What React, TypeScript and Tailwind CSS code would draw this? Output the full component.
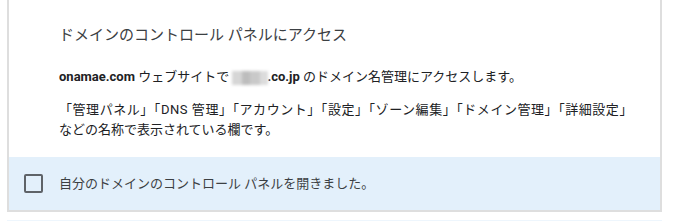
export default function App() {
  return (
    <div
      className="w-[674px] h-[221px] overflow-hidden bg-white pl-[7px]"
      style={{ fontFamily: 'Roboto, "Noto Sans CJK JP", sans-serif' }}
    >
      <div className="w-[655px] border-x-2 border-b-2 border-[#dedede] bg-white">
        <div className="pl-[50px] pr-4 pt-[23px] pb-[17px]">
          <h2 className="text-[15px] leading-6 text-[#3c4043] font-normal">
            ドメインのコントロール パネルにアクセス
          </h2>
          <p className="mt-5 text-[13px] leading-5 text-[#202124]">
            <span className="font-bold">onamae.com</span> ウェブサイトで{" "}
            <span className="relative inline-block align-middle w-[36px] h-[14px] -mr-[1px]">
              <span className="absolute inset-0 flex blur-[1.5px]">
                <span className="w-[10px] bg-[#d6d6d6]" />
                <span className="w-[8px] bg-[#bdbdbd]" />
                <span className="w-[10px] bg-[#c9c9c9]" />
                <span className="w-[8px] bg-[#dcdcdc]" />
              </span>
            </span>
            <span className="font-bold">.co.jp</span> のドメイン名管理にアクセスします。
          </p>
          <p className="mt-[13px] text-[13px] leading-5 text-[#202124]">
            <span className="tracking-[0.55px] whitespace-nowrap">
              「管理パネル」「DNS 管理」「アカウント」「設定」「ゾーン編集」「ドメイン管理」「詳細設定」
            </span>
            <br />
            などの名称で表示されている欄です。
          </p>
        </div>
        <label className="flex items-center h-[53px] bg-[#e3f0fb] pl-[15px]">
          <span className="w-[19px] h-[19px] border-2 border-[#5f6368] rounded-[2px] shrink-0" />
          <span className="ml-4 text-[13px] text-[#3c4043]">
            自分のドメインのコントロール パネルを開きました。
          </span>
        </label>
      </div>
      <div className="mt-[8px] w-[655px] h-[4px] bg-[#eef6fd]" />
    </div>
  );
}
